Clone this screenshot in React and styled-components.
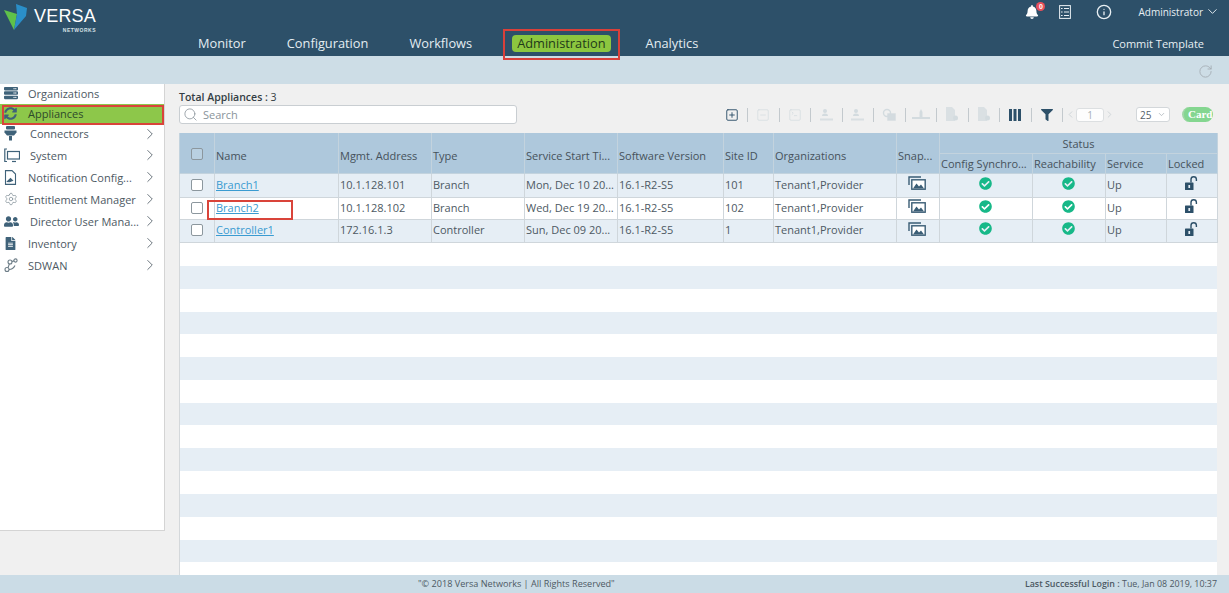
import React from 'react';
import styled, { createGlobalStyle } from 'styled-components';
import { ChevronDown, ChevronRight, ChevronLeft, Search, RotateCw, SquarePlus, SquareMinus, SquareTerminal, Settings } from 'lucide-react';
import { FaBell, FaCheckCircle, FaFilter, FaUserFriends, FaFileAlt, FaServer, FaSyncAlt } from 'react-icons/fa';
import { FiInfo } from 'react-icons/fi';

const GlobalStyle = createGlobalStyle`
  html, body { margin: 0; height: 100%; overflow: hidden; }
  body { font-family: "Open Sans", "Liberation Sans", sans-serif; color: #4d5963; }
  * { box-sizing: border-box; }
`;

const Page = styled.div`
  height: 593px;
  display: flex;
  flex-direction: column;
  background: #f0f0f0;
`;

// top bar
const Header = styled.header`
  height: 56px;
  flex: none;
  background: #2d5069;
  display: flex;
  position: relative;
`;

const LogoBox = styled.div`
  width: 198px;
  flex: none;
  padding: 4px 0 0 4px;
  display: flex;
  gap: 6px;
`;

const LogoWords = styled.div`
  display: flex;
  flex-direction: column;
  align-items: flex-end;
  color: #fff;
`;

const LogoName = styled.span`
  font: 400 18px/20px "Liberation Sans", sans-serif;
  letter-spacing: 0.2px;
  margin-top: 2px;
`;

const LogoSub = styled.span`
  font: 700 5px/6px "Liberation Sans", sans-serif;
  letter-spacing: 0.5px;
  color: #d7e0e6;
  margin-top: 1px;
`;

const Nav = styled.nav`
  display: flex;
  gap: 41px;
  align-items: center;
  height: 24px;
  margin-top: 31px;
`;

const NavItem = styled.span`
  position: relative;
  font-size: 12.8px;
  color: ${p => (p.$active ? '#1f3a1a' : '#e4edf2')};
  ${p => p.$active && `
    background: #8cc63f;
    border-radius: 4px;
    padding: 0 5px;
    height: 17px;
    line-height: 17px;
    margin: 0 -6px 0 -1px;
  `}
`;

const NavMark = styled.span`
  position: absolute;
  left: -9px;
  right: -9px;
  top: -6px;
  bottom: -8px;
  border: 2px solid #d9403a;
`;

const HeaderRight = styled.div`
  margin-left: auto;
  width: 210px;
  display: flex;
  flex-direction: column;
  align-items: flex-end;
  padding-right: 9px;
  color: #e8eff3;
`;

const HeaderTools = styled.div`
  display: flex;
  align-items: center;
  height: 23px;
`;

const Bell = styled.span`
  position: relative;
  display: flex;
  width: 34px;
`;

const BellBadge = styled.span`
  position: absolute;
  left: 11px;
  top: -3px;
  width: 9px;
  height: 9px;
  border-radius: 50%;
  background: #e8505b;
  color: #fff;
  font: 700 7px/9px "Liberation Sans", sans-serif;
  text-align: center;
`;

const HeaderIcon = styled.span`
  display: flex;
  width: ${p => p.$w}px;
`;

const UserName = styled.span`
  font-size: 10px;
  margin-right: 2px;
`;

const CommitLink = styled.span`
  font-size: 11px;
  margin: 13px 16px 0 0;
`;

const SubBar = styled.div`
  height: 28px;
  flex: none;
  background: #cddde6;
  display: flex;
  align-items: center;
  justify-content: flex-end;
  padding: 2px 16px 0 0;
  color: #a3acb2;
`;

const Body = styled.div`
  flex: 1;
  min-height: 0;
  display: flex;
`;

// left menu
const Sidebar = styled.aside`
  width: 165px;
  flex: none;
  height: 447px;
  background: #fff;
  border-right: 1px solid #d4d4d4;
  border-bottom: 1px solid #d4d4d4;
`;

const MenuRow = styled.div`
  position: relative;
  height: ${p => p.$h || 22}px;
  display: flex;
  align-items: center;
  font-size: 11px;
  color: #4d5963;
  padding: 0 5px 2px 4px;
  background: ${p => (p.$active ? '#8dc74a' : 'transparent')};
  ${p => p.$active && 'color: #2d4a2a;'}
`;

const MenuIcon = styled.span`
  width: ${p => (p.$indent ? 26 : 24)}px;
  flex: none;
  display: flex;
  color: ${p => p.$tone || '#3f6279'};
`;

const MenuLabel = styled.span`
  flex: 1;
  white-space: nowrap;
`;

const MenuArrow = styled.span`
  display: flex;
  color: #5c6870;
`;

const MenuMark = styled.span`
  position: absolute;
  left: 2px;
  right: 0;
  top: 1px;
  bottom: -1px;
  border: 2px solid #d9443a;
`;

// right panel
const Content = styled.main`
  flex: 1;
  min-width: 0;
  display: flex;
  flex-direction: column;
  padding: 6px 12px 0 14px;
`;

const TotalLine = styled.div`
  font-size: 10.5px;
  line-height: 15px;
  color: #333d44;
  font-weight: 600;
  & > span { font-weight: 400; }
`;

const ToolRow = styled.div`
  height: 19px;
  display: flex;
  align-items: center;
  margin-bottom: 9px;
`;

const SearchBox = styled.div`
  width: 338px;
  height: 19px;
  background: #fff;
  border: 1px solid #c9ced2;
  border-radius: 3px;
  display: flex;
  align-items: center;
  gap: 5px;
  padding-left: 3px;
  font-size: 11px;
  color: #8a949b;
`;

const Toolbar = styled.div`
  margin-left: auto;
  display: flex;
  align-items: center;
  padding-right: 4px;
`;

const ToolButton = styled.span`
  width: 31.5px;
  height: 14px;
  display: flex;
  align-items: center;
  justify-content: center;
  border-right: 1px solid #c3c9cd;
  color: ${p => (p.$on ? '#2d5069' : '#d3dbdf')};
`;

const Pager = styled.span`
  display: flex;
  align-items: center;
  color: #cdd3d7;
  margin-left: 2px;
`;

const PageBox = styled.span`
  width: 28px;
  height: 14px;
  background: #fdfdfd;
  border: 1px solid #dcdfe1;
  border-radius: 3px;
  font-size: 10px;
  line-height: 12px;
  text-align: center;
  color: #a8b0b5;
`;

const PageSize = styled.span`
  width: 34px;
  height: 15px;
  margin: 0 12px 0 21px;
  background: #fff;
  border: 1px solid #d3d7da;
  border-radius: 3px;
  display: flex;
  align-items: center;
  justify-content: space-between;
  padding: 0 3px;
  font-size: 10px;
  color: #56616a;
`;

const CardToggle = styled.span`
  width: 31px;
  height: 15px;
  overflow: hidden;
  border-left: 2px solid #9fd7a6;
  background: #84d690;
  border-radius: 8px;
  color: #fff;
  font: 700 11px/15px "Liberation Serif", serif;
  padding-left: 4px;
`;

const TableWrap = styled.div`
  flex: 1;
  min-height: 0;
  display: flex;
  flex-direction: column;
  background: #fff;
`;

const Table = styled.table`
  width: 1038px;
  table-layout: fixed;
  border-collapse: collapse;
  font-size: 11px;
  flex: none;
`;

const Th = styled.th`
  background: #aec8dc;
  border: 1px solid #c3d3de;
  border-top: 0;
  font-weight: 400;
  color: #46525b;
  text-align: ${p => (p.$center ? 'center' : 'left')};
  padding: ${p => (p.$center ? '0' : '0 1px')};
  ${p => p.$low && 'padding-top: 6px;'}
  height: 20px;
  white-space: nowrap;
  overflow: hidden;
`;

const StatusLabel = styled.span`
  position: relative;
  top: 1px;
`;

const Tr = styled.tr`
  background: ${p => (p.$alt ? '#fff' : '#e6eef5')};
  height: ${p => p.$h}px;
`;

const Td = styled.td`
  position: relative;
  border: 1px solid #cfd6db;
  color: #4d5963;
  padding: ${p => (p.$center ? '0 2px 4px 0' : '0 1px 2px')};
  text-align: ${p => (p.$center ? 'center' : 'left')};
  white-space: nowrap;
  line-height: 1;
  & > svg { vertical-align: middle; }
`;

const Check = styled.span`
  display: inline-block;
  width: 12px;
  height: 12px;
  background: ${p => (p.$head ? '#b9d0e1' : '#fff')};
  border: 1px solid #8c979e;
  border-radius: 2px;
  vertical-align: middle;
`;

const CheckCell = styled(Td)`
  padding: 0 0 2px;
  text-align: center;
`;

const NameLink = styled.a`
  color: #3a9bd1;
  text-decoration: underline;
`;

const CellMark = styled.span`
  position: absolute;
  left: -8px;
  top: 2px;
  width: 86px;
  height: 20px;
  border: 2px solid #d9443a;
`;

const Stripes = styled.div`
  flex: 1;
  background: repeating-linear-gradient(#fff 0 23px, #e6eef5 23px 45.6px);
  border-left: 1px solid #d4d8db;
`;

const Footer = styled.footer`
  height: 18px;
  flex: none;
  background: #cbdce6;
  display: flex;
  align-items: center;
  font-size: 9.1px;
  color: #4d5963;
  padding: 0 12px 2px 418px;
  justify-content: space-between;
`;

const LastLogin = styled.span`
  font-size: 8.9px;
  & > b { font-weight: 600; }
`;

function Logo() {
  return (
    <svg width="24" height="27" viewBox="0 0 24 27">
      <polygon points="0,6 13,10 10,26" fill="#5fc24a" />
      <polygon points="12,0 23,4 22,12 10,26 13,10" fill="#2a8fc9" />
    </svg>
  );
}

function ListGlyph() {
  return (
    <svg width="12" height="14" viewBox="0 0 12 14" fill="none" stroke="currentColor">
      <rect x="0.6" y="0.6" width="10.8" height="12.8" />
      <path d="M5 3.5h5M5 7h5M5 10.5h5M2 3.5h1.6M2 7h1.6M2 10.5h1.6" />
    </svg>
  );
}

// the pictures in the Snap... column
function SnapshotGlyph() {
  return (
    <svg width="18" height="14" viewBox="0 0 18 14">
      <path d="M1 9V1h12" fill="none" stroke="#3a5d75" strokeWidth="1.4" />
      <rect x="3.8" y="3.8" width="13.4" height="9.4" fill="#fff" stroke="#3a5d75" strokeWidth="1.4" />
      <path d="M5 12.500l3.500-5 2.500 3 2-2 3 4z" fill="#3a5d75" />
    </svg>
  );
}

function OpenLockGlyph() {
  return (
    <svg width="13" height="14" viewBox="0 0 13 14">
      <rect x="0" y="6.5" width="8.5" height="7.5" rx="0.6" fill="#2d5069" />
      <rect x="3.4" y="9" width="1.7" height="3" fill="#e6eef5" />
      <path d="M6 6.5V3.4a2.7 2.7 0 0 1 5.4 0V5" fill="none" stroke="#2d5069" strokeWidth="1.4" />
    </svg>
  );
}

function TrayPerson() {
  return (
    <svg width="15" height="14" viewBox="0 0 15 14" fill="currentColor">
      <circle cx="6" cy="3" r="2" />
      <path d="M3 8c0-1.600 1.400-2.400 3-2.400S9 6.400 9 8z" />
      <path d="M1 10.500h13v2H1z" opacity=".8" />
    </svg>
  );
}

function TrayFlat() {
  return (
    <svg width="18" height="13" viewBox="0 0 18 13" fill="currentColor">
      <path d="M7.500 4 9 1l1.500 3v5h-3z" />
      <path d="M0 9h18v2H0z" />
    </svg>
  );
}

function DocGlyph() {
  return (
    <svg width="14" height="15" viewBox="0 0 14 15" fill="currentColor">
      <path d="M1 0h6l3 3v11H1z" opacity=".75" />
      <circle cx="10.500" cy="11" r="2.500" />
    </svg>
  );
}

function CopyGlyph() {
  return (
    <svg width="15" height="14" viewBox="0 0 15 14" fill="none" stroke="currentColor" strokeWidth="1.4">
      <circle cx="5" cy="5" r="3.500" />
      <rect x="6" y="6" width="7" height="6" fill="currentColor" />
    </svg>
  );
}

function ColumnsGlyph() {
  return (
    <svg width="12" height="12" viewBox="0 0 12 12" fill="currentColor">
      <rect x="0" width="3" height="12" />
      <rect x="4.500" width="3" height="12" />
      <rect x="9" width="3" height="12" />
    </svg>
  );
}

function PlugGlyph() {
  return (
    <svg width="13" height="15" viewBox="0 0 13 15" fill="currentColor">
      <rect x="2" y="0" width="9" height="3.500" rx="1" />
      <path d="M0.500 4.500h12v2l-2.500 3H3l-2.500-3z" />
      <rect x="5" y="10" width="3" height="4.500" />
    </svg>
  );
}

function SystemGlyph() {
  return (
    <svg width="16" height="15" viewBox="0 0 16 15" fill="none" stroke="currentColor" strokeWidth="1.2">
      <path d="M3 1H.8v12.500H3" />
      <rect x="3.500" y="3.500" width="12" height="7.500" />
      <path d="M8 13.500h4" />
    </svg>
  );
}

function NoticeGlyph() {
  return (
    <svg width="13" height="15" viewBox="0 0 13 15" fill="none" stroke="currentColor" strokeWidth="1.1">
      <path d="M1.500.6h6.500l3.500 3.500v10.300h-10z" />
      <path d="M3.500 11.500 6.500 8.500l2 2-3 1.200z" fill="currentColor" />
    </svg>
  );
}

function LinksGlyph() {
  return (
    <svg width="14" height="15" viewBox="0 0 14 15" fill="none" stroke="currentColor" strokeWidth="1.1">
      <circle cx="3" cy="11.500" r="2" />
      <circle cx="6" cy="4" r="2" />
      <circle cx="11.500" cy="2.500" r="1.600" />
      <path d="M4 9.800 5.400 5.900M7.900 3.500 10 2.900M5 11.500c3 0 5-2 6-4" />
    </svg>
  );
}

const menu = [
  { label: 'Organizations', icon: <FaServer size={14} />, h: 20 },
  { label: 'Appliances', icon: <FaSyncAlt size={13} />, h: 20, active: true },
  { label: 'Connectors', icon: <PlugGlyph />, arrow: true, indent: true, h: 21 },
  { label: 'System', icon: <SystemGlyph />, arrow: true, indent: true },
  { label: 'Notification Config...', icon: <NoticeGlyph />, arrow: true },
  { label: 'Entitlement Manager', icon: <Settings size={14} strokeWidth={1.2} />, arrow: true, tone: '#7d8b94' },
  { label: 'Director User Mana...', icon: <FaUserFriends size={15} />, arrow: true, indent: true },
  { label: 'Inventory', icon: <FaFileAlt size={13} />, arrow: true },
  { label: 'SDWAN', icon: <LinksGlyph />, arrow: true, tone: '#6d7d87' },
];

const widths = [35, 124, 93, 93, 93, 106, 50, 123, 43, 93, 73, 61, 51];

const rows = [
  { name: 'Branch1', addr: '10.1.128.101', type: 'Branch', start: 'Mon, Dec 10 20...', site: '101', h: 24 },
  { name: 'Branch2', addr: '10.1.128.102', type: 'Branch', start: 'Wed, Dec 19 20...', site: '102', h: 22, mark: true },
  { name: 'Controller1', addr: '172.16.1.3', type: 'Controller', start: 'Sun, Dec 09 20...', site: '1', h: 23 },
];

const toolIcons = [
  { icon: <SquarePlus size={14} strokeWidth={1.6} />, on: true },
  { icon: <SquareMinus size={14} strokeWidth={1.3} /> },
  { icon: <SquareTerminal size={14} strokeWidth={1.3} /> },
  { icon: <TrayPerson /> },
  { icon: <TrayPerson /> },
  { icon: <CopyGlyph /> },
  { icon: <TrayFlat /> },
  { icon: <DocGlyph /> },
  { icon: <DocGlyph /> },
  { icon: <ColumnsGlyph />, on: true },
  { icon: <FaFilter size={12} />, on: true },
];

export default function App() {
  return (
    <Page>
      <GlobalStyle />
      <Header>
        <LogoBox>
          <Logo />
          <LogoWords>
            <LogoName>VERSA</LogoName>
            <LogoSub>NETWORKS</LogoSub>
          </LogoWords>
        </LogoBox>
        <Nav>
          <NavItem>Monitor</NavItem>
          <NavItem>Configuration</NavItem>
          <NavItem>Workflows</NavItem>
          <NavItem $active>Administration<NavMark /></NavItem>
          <NavItem>Analytics</NavItem>
        </Nav>
        <HeaderRight>
          <HeaderTools>
            <Bell><FaBell size={14} color="#fff" /><BellBadge>0</BellBadge></Bell>
            <HeaderIcon $w={37}><ListGlyph /></HeaderIcon>
            <HeaderIcon $w={42}><FiInfo size={16} /></HeaderIcon>
            <UserName>Administrator</UserName>
            <ChevronDown size={15} strokeWidth={1.5} />
          </HeaderTools>
          <CommitLink>Commit Template</CommitLink>
        </HeaderRight>
      </Header>
      <SubBar><RotateCw size={15} strokeWidth={1.4} /></SubBar>
      <Body>
        <Sidebar>
          {menu.map(m => (
            <MenuRow key={m.label} $active={m.active} $h={m.h}>
              <MenuIcon $indent={m.indent} $tone={m.tone}>{m.icon}</MenuIcon>
              <MenuLabel>{m.label}</MenuLabel>
              {m.arrow && <MenuArrow><ChevronRight size={18} strokeWidth={1.2} /></MenuArrow>}
              {m.active && <MenuMark />}
            </MenuRow>
          ))}
        </Sidebar>
        <Content>
          <TotalLine>Total Appliances : <span>3</span></TotalLine>
          <ToolRow>
            <SearchBox><Search size={15} strokeWidth={1.3} />Search</SearchBox>
            <Toolbar>
              {toolIcons.map((t, i) => <ToolButton key={i} $on={t.on}>{t.icon}</ToolButton>)}
              <Pager>
                <ChevronLeft size={11} />
                <PageBox>1</PageBox>
                <ChevronRight size={11} />
              </Pager>
              <PageSize>25<ChevronDown size={9} color="#aab2b8" /></PageSize>
              <CardToggle>Card</CardToggle>
            </Toolbar>
          </ToolRow>
          <TableWrap>
            <Table>
              <colgroup>{widths.map((w, i) => <col key={i} style={{ width: w }} />)}</colgroup>
              <thead>
                <tr>
                  <Th rowSpan={2} $center><Check $head /></Th>
                  <Th rowSpan={2} $low>Name</Th>
                  <Th rowSpan={2} $low>Mgmt. Address</Th>
                  <Th rowSpan={2} $low>Type</Th>
                  <Th rowSpan={2} $low>Service Start Ti...</Th>
                  <Th rowSpan={2} $low>Software Version</Th>
                  <Th rowSpan={2} $low>Site ID</Th>
                  <Th rowSpan={2} $low>Organizations</Th>
                  <Th rowSpan={2} $low>Snap...</Th>
                  <Th colSpan={4} $center><StatusLabel>Status</StatusLabel></Th>
                </tr>
                <tr>
                  <Th>Config Synchro...</Th>
                  <Th>Reachability</Th>
                  <Th>Service</Th>
                  <Th>Locked</Th>
                </tr>
              </thead>
              <tbody>
                {rows.map((r, i) => (
                  <Tr key={r.name} $alt={i % 2 === 1} $h={r.h}>
                    <CheckCell><Check /></CheckCell>
                    <Td>
                      <NameLink>{r.name}</NameLink>
                      {r.mark && <CellMark />}
                    </Td>
                    <Td>{r.addr}</Td>
                    <Td>{r.type}</Td>
                    <Td>{r.start}</Td>
                    <Td>16.1-R2-S5</Td>
                    <Td>{r.site}</Td>
                    <Td>Tenant1,Provider</Td>
                    <Td $center><SnapshotGlyph /></Td>
                    <Td $center><FaCheckCircle size={13} color="#17b888" /></Td>
                    <Td $center><FaCheckCircle size={13} color="#17b888" /></Td>
                    <Td>Up</Td>
                    <Td $center><OpenLockGlyph /></Td>
                  </Tr>
                ))}
              </tbody>
            </Table>
            <Stripes />
          </TableWrap>
        </Content>
      </Body>
      <Footer>
        <span>"© 2018 Versa Networks | All Rights Reserved"</span>
        <LastLogin><b>Last Successful Login :</b> Tue, Jan 08 2019, 10:37</LastLogin>
      </Footer>
    </Page>
  );
}
